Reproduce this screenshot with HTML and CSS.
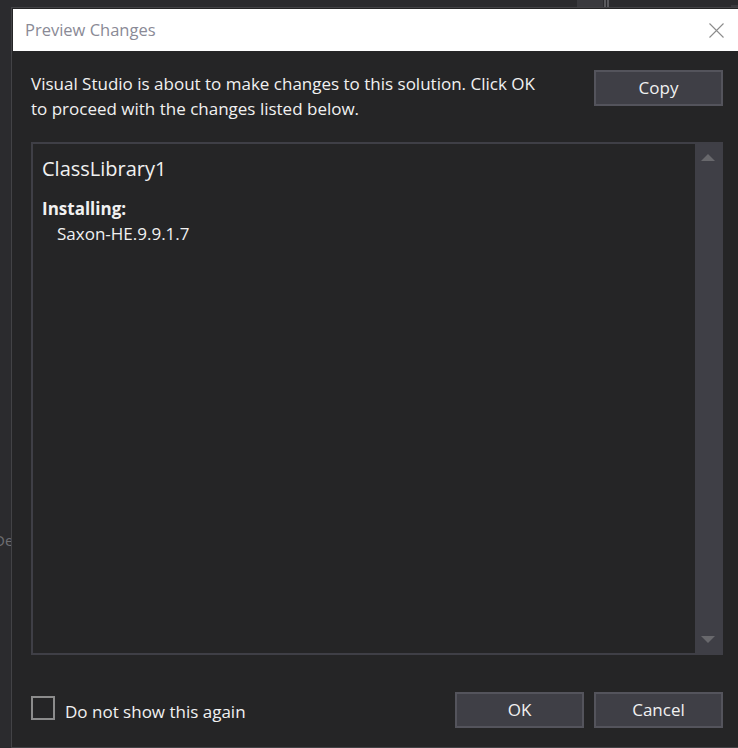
FILE: index.html
```html
<!DOCTYPE html>
<html>
<head>
<meta charset="utf-8">
<link rel="stylesheet" href="styles.css">
</head>
<body>
<div class="desktop">
  <div class="ide-fragment frag-top"><span class="frag-tab"></span><span class="frag-line"></span><span class="frag-line"></span></div>
  <div class="ide-fragment frag-bottom"><span class="frag-tab"></span><span class="frag-dot"></span></div>
  <div class="ide-fragment frag-corner"></div>
  <span class="ide-text">De</span>

  <div class="dialog">
    <div class="titlebar">
      <span class="title">Preview Changes</span>
      <svg class="close" width="15" height="15" viewBox="0 0 15 15"><path d="M0.5 0.5 L14.5 14.5 M14.5 0.5 L0.5 14.5" stroke="#8c8c8c" stroke-width="1.1" fill="none"/></svg>
    </div>
    <div class="content">
      <div class="top-row">
        <p class="message">Visual Studio is about to make changes to this solution. Click OK<br>to proceed with the changes listed below.</p>
        <button class="btn">Copy</button>
      </div>
      <div class="listbox">
        <div class="list-content">
          <div class="project">ClassLibrary1</div>
          <div class="section-label">Installing:</div>
          <div class="package">Saxon-HE.9.9.1.7</div>
        </div>
        <div class="scrollbar">
          <span class="arrow up"></span>
          <span class="arrow down"></span>
        </div>
      </div>
      <div class="bottom-row">
        <label class="check"><span class="box"></span><span class="check-text">Do not show this again</span></label>
        <div class="buttons">
          <button class="btn">OK</button>
          <button class="btn">Cancel</button>
        </div>
      </div>
    </div>
  </div>
</div>
</body>
</html>
```
FILE: styles.css
```css
html, body {
  margin: 0;
  padding: 0;
  width: 738px;
  height: 748px;
  overflow: hidden;
  background: #2b2b2e;
  font-family: "Open Sans", "Noto Sans", sans-serif;
}

.desktop {
  position: relative;
  width: 738px;
  height: 748px;
  overflow: hidden;
}

.ide-fragment {
  position: absolute;
  display: flex;
}
.frag-top {
  left: 577px;
  top: 0;
  height: 7px;
}
.frag-bottom {
  left: 577px;
  top: 747px;
  height: 1px;
}
.frag-tab {
  width: 26px;
  height: 100%;
  background: #3a3a3e;
}
.frag-line {
  width: 2px;
  height: 100%;
  margin-left: 1px;
  background: #5a5a5e;
}
.frag-dot {
  width: 4px;
  height: 100%;
  margin-left: 2px;
  background: #505054;
}
.frag-corner {
  left: 731px;
  top: 5px;
  width: 7px;
  height: 2px;
  background: #3a3a3e;
}
.ide-text {
  position: absolute;
  left: -6px;
  top: 530px;
  font-size: 15px;
  color: #6e6e72;
}

.dialog {
  position: absolute;
  left: 11px;
  top: 7px;
  width: 728px;
  height: 737px;
  padding: 1px;
  border: 1px solid #434346;
  background: #252526;
  display: flex;
  flex-direction: column;
}

.titlebar {
  height: 42px;
  background: #ffffff;
  display: flex;
  align-items: center;
  justify-content: space-between;
  padding: 0 17px 0 12px;
  flex: none;
}
.title {
  font-size: 16.5px;
  line-height: 42px;
  color: #8a8a96;
}
.close {
  display: block;
  margin-top: 1px;
}

.content {
  flex: 1;
  padding: 19px 18px 18px 18px;
  display: flex;
  flex-direction: column;
  color: #f1f1f1;
}

.top-row {
  display: flex;
  justify-content: space-between;
  align-items: flex-start;
  height: 36px;
}
.message {
  margin: 2px 0 0 0;
  font-size: 17px;
  line-height: 24.5px;
  color: #f1f1f1;
  white-space: nowrap;
}

.btn {
  width: 129px;
  height: 36px;
  box-sizing: border-box;
  background: #3f3f46;
  border: 2px solid #54545c;
  color: #f1f1f1;
  font-family: "Open Sans", "Noto Sans", sans-serif;
  font-size: 17px;
  padding: 0 0 1px 0;
  margin: 0;
}

.listbox {
  margin-top: 36px;
  height: 513px;
  box-sizing: border-box;
  border: 2px solid #3f3f46;
  display: flex;
}
.list-content {
  flex: 1;
  padding: 13px 10px 0 9px;
}
.project {
  font-size: 20px;
  line-height: 24px;
}
.section-label {
  margin-top: 15px;
  font-size: 17px;
  line-height: 25px;
  font-weight: 700;
}
.package {
  font-size: 17px;
  line-height: 25px;
  padding-left: 15px;
}

.scrollbar {
  width: 26px;
  background: #3f3f46;
  display: flex;
  flex-direction: column;
  justify-content: space-between;
  align-items: center;
  padding: 10px 0 10px 0;
}
.arrow {
  width: 0;
  height: 0;
  border-left: 7px solid transparent;
  border-right: 7px solid transparent;
}
.arrow.up {
  border-bottom: 7px solid #68686c;
}
.arrow.down {
  border-top: 7px solid #68686c;
}

.bottom-row {
  margin-top: 37px;
  height: 36px;
  display: flex;
  justify-content: space-between;
  align-items: flex-start;
}
.check {
  display: flex;
  align-items: flex-start;
  margin-top: 4px;
}
.box {
  width: 24px;
  height: 24px;
  box-sizing: border-box;
  border: 2px solid #8c8c8c;
}
.check-text {
  margin-left: 10px;
  font-size: 17px;
  padding-top: 4px;
}
.buttons {
  display: flex;
  gap: 10px;
}
```
